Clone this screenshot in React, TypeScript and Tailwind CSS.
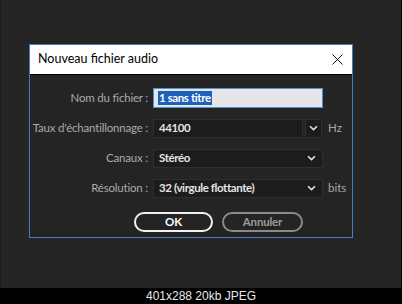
import React from "react";

function Chevron() {
  return (
    <svg width="9" height="6" viewBox="0 0 9 6" fill="none">
      <path d="M1 1.2 L4.5 4.6 L8 1.2" stroke="#e0e0e0" strokeWidth="1.6" />
    </svg>
  );
}

export default function App() {
  const font = { fontFamily: 'Lato, "Noto Sans", sans-serif' };
  const label = "w-[118px] flex justify-end whitespace-nowrap text-[11.5px] tracking-[-0.2px] text-[#ababab]";
  const value = "text-[11.5px] font-bold tracking-[-0.4px] text-[#e4e4e4]";
  return (
    <div className="w-[402px] h-[304px] bg-black flex flex-col" style={font}>
      <div className="w-[401px] h-[288px] bg-[#252525] border-l border-[#1b1b1b] pt-[44px] pl-[28px]">
        <div className="w-[324px] h-[194px] border border-[#3d82c6] bg-[#242424] flex flex-col">
          <div className="h-[30px] bg-white flex items-center justify-between pl-[8px] pr-[9px] border-b border-black">
            <span className="text-[12.5px] text-black">Nouveau fichier audio</span>
            <svg width="11" height="11" viewBox="0 0 11 11">
              <path d="M0.5 0.5 L10.5 10.5 M10.5 0.5 L0.5 10.5" stroke="#111" strokeWidth="1" />
            </svg>
          </div>
          <div className="flex flex-col pt-[8px]">
            <div className="h-[30px] flex items-center">
              <div className={label}>Nom du fichier :</div>
              <div className="ml-[5px] w-[170px] h-[20px] bg-[#e6e5e7] border border-[#4b93dc] flex items-center pl-[4px]">
                <span className="bg-[#1d62b8] text-white text-[11.5px] font-bold tracking-[-0.4px] leading-[14px] px-px">1 sans titre</span>
              </div>
            </div>
            <div className="h-[30px] flex items-center">
              <div className={label}>Taux d'échantillonnage :</div>
              <div className={"ml-[5px] w-[150px] h-[19px] bg-[#1c1c1c] border border-[#2f2f2f] flex items-center pl-[5px] " + value}>
                44100
              </div>
              <div className="ml-[2px] w-[17px] h-[19px] bg-[#1c1c1c] border border-[#2f2f2f] flex items-center justify-center">
                <Chevron />
              </div>
              <div className="ml-[6px] text-[11.5px] text-[#a8a8a8]">Hz</div>
            </div>
            <div className="h-[30px] flex items-center">
              <div className={label}>Canaux :</div>
              <div className={"ml-[5px] w-[170px] h-[19px] bg-[#1c1c1c] border border-[#2f2f2f] flex items-center justify-between pl-[5px] pr-[6px] " + value}>
                <span>Stéréo</span>
                <Chevron />
              </div>
            </div>
            <div className="h-[30px] flex items-center">
              <div className={label}>Résolution :</div>
              <div className={"ml-[5px] w-[170px] h-[19px] bg-[#1c1c1c] border border-[#2f2f2f] flex items-center justify-between pl-[5px] pr-[6px] " + value}>
                <span>32 (virgule flottante)</span>
                <Chevron />
              </div>
              <div className="ml-[5px] text-[11.5px] text-[#a8a8a8]">bits</div>
            </div>
            <div className="flex items-center mt-[9px] pl-[104px] gap-[9px]">
              <div className="w-[79px] h-[20px] rounded-full border-2 border-[#f2f2f2] flex items-center justify-center text-[11.5px] font-bold text-white">
                OK
              </div>
              <div className="w-[81px] h-[20px] rounded-full border-2 border-[#8a8a8a] flex items-center justify-center text-[11.5px] font-bold tracking-[-0.2px] text-[#9c9c9c]">
                Annuler
              </div>
            </div>
          </div>
        </div>
      </div>
      <div className="h-[16px] flex items-center justify-center text-[12px] text-[#e8e8e8]" style={{ fontFamily: '"Liberation Sans", Arial, sans-serif' }}>
        401x288 20kb JPEG
      </div>
    </div>
  );
}
